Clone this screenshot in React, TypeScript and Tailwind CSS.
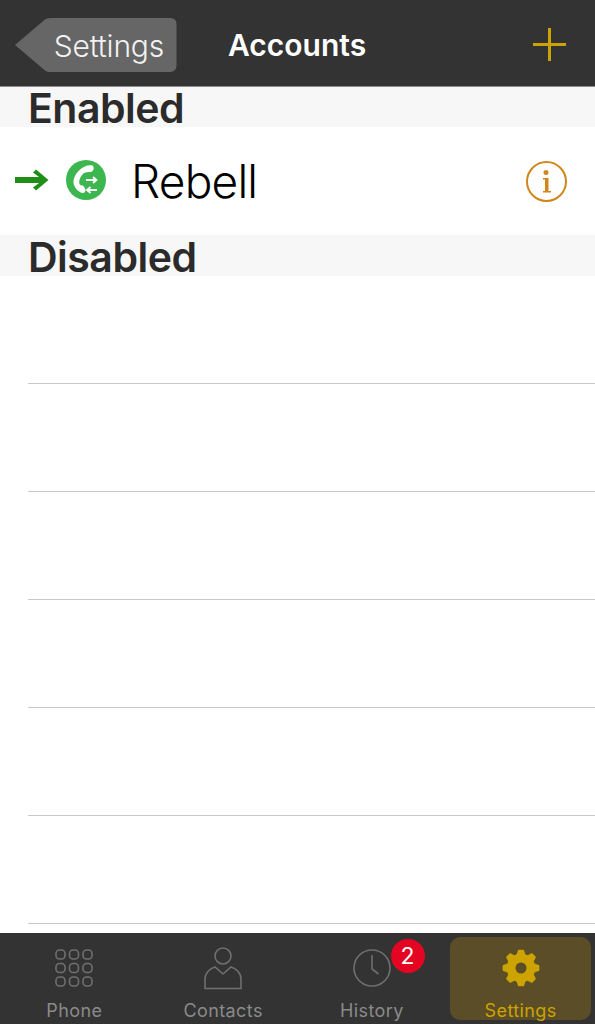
const font = { fontFamily: 'Inter, "Liberation Sans", Arial, sans-serif' };

function KeypadIcon() {
  const spots = [0, 1, 2];
  return (
    <svg width="38" height="38" viewBox="0 0 38 38" fill="none" stroke="#6f6f6f" strokeWidth="1.6">
      {spots.map((r) =>
        spots.map((c) => (
          <rect key={`${r}-${c}`} x={1 + c * 13.5} y={1 + r * 13.5} width="9" height="9" rx="3.500" />
        ))
      )}
    </svg>
  );
}

function ContactIcon() {
  return (
    <svg width="38" height="43" viewBox="0 0 38 43" fill="none" stroke="#6f6f6f" strokeWidth="1.6">
      <circle cx="19" cy="9" r="8" />
      <path d="M1 41.500V32C1 26 6 21.500 11 20L19 27L27 20C32 21.500 37 26 37 32V41.500Z" />
    </svg>
  );
}

function ClockIcon() {
  return (
    <svg width="38" height="38" viewBox="0 0 38 38" fill="none" stroke="#6f6f6f" strokeWidth="1.6">
      <circle cx="19" cy="19" r="18" />
      <path d="M19 6V20L25.500 25" />
    </svg>
  );
}

// 8 toothed cog, points worked out from the angles
function GearIcon() {
  const pts: string[] = [];
  for (let i = 0; i < 8; i++) {
    const a = (i * Math.PI) / 4;
    const at = (r: number, d: number) => {
      const t = a + (d * Math.PI) / 180;
      return `${(19 + r * Math.sin(t)).toFixed(2)} ${(19 - r * Math.cos(t)).toFixed(2)}`;
    };
    pts.push(at(13.5, -15), at(17.5, -7), at(17.5, 7), at(13.5, 15));
  }
  return (
    <svg width="38" height="38" viewBox="0 0 38 38" fill="#cca300" stroke="#cca300" strokeWidth="2" strokeLinejoin="round">
      <path
        fillRule="evenodd"
        d={`M${pts.join("L")}Z M19 12.500a6.500 6.500 0 1 0 0 13a6.500 6.500 0 0 0 0 -13Z`}
      />
    </svg>
  );
}

function AccountBadge() {
  return (
    <svg width="40" height="40" viewBox="0 0 40 40">
      <circle cx="20" cy="20" r="20" fill="#3cb64f" />
      <path
        d="M26.500 5.500C22 4.500 17 6.500 13 10.500C9 14.500 7 19 7.500 23C8 27 12 32 16.500 33C18.500 33.300 20 31 19.500 29.500L17.500 26C16.500 25 15 26 13.800 24.500C12.500 22.500 13.500 17.500 16.500 14.500C18 13 19.500 12 21 12.300L25.500 11.800C27.800 11 28.500 7 26.500 5.500Z"
        fill="#fff"
      />
      <path d="M20 20H30M27 17L30.500 20L27 23" fill="none" stroke="#fff" strokeWidth="1.800" />
      <path d="M31 30H21.500M24.500 27L21 30L24.500 33" fill="none" stroke="#fff" strokeWidth="1.800" />
    </svg>
  );
}

function GreenArrow() {
  return (
    <svg width="34" height="22" viewBox="0 0 34 22">
      <path d="M0 8H24L18 3.500L21 .5L33.500 11L21 21.500L18 18.500L24 14H0Z" fill="#1f8f17" />
    </svg>
  );
}

function SectionHeader({ title, height }: { title: string; height: string }) {
  return (
    <div className={`${height} bg-[#f7f7f7] pl-7 flex items-center`}>
      <span className="text-[41px] font-semibold text-[#2b2b2b] leading-none mt-[3px] tracking-[-0.5px]">{title}</span>
    </div>
  );
}

function Tab({ label, icon, active }: { label: string; icon: React.ReactNode; active?: boolean }) {
  return (
    <div
      className={`rounded-[10px] flex flex-col items-center h-[83px] ${
        active ? "bg-[#5a4d27] text-[#cca300] ml-[4px] mr-[4px]" : "text-[#8a8a8a]"
      }`}
    >
      <div className="h-[52px] shrink-0 flex items-center justify-center mt-[5px]">{icon}</div>
      <span className="shrink-0 text-[18px] tracking-[0.4px] leading-[22px] mt-[6px]">{label}</span>
    </div>
  );
}

export default function App() {
  return (
    <div className="w-[595px] h-[1024px] bg-white flex flex-col overflow-hidden" style={font}>
      {/* nav bar */}
      <div className="h-[87px] shrink-0 bg-[#333333] border-b border-[#8c8c8c] flex items-center pl-[15px] pr-[29px] pt-[3px]">
        <div className="relative w-[162px] h-[54px] flex items-center justify-end pr-[13px]">
          <svg className="absolute inset-0" width="162" height="54" viewBox="0 0 162 54">
            <path
              d="M0 27L30 1.500Q32 0 35 0H155Q161.500 0 161.500 6V47Q161.500 54 155 54H35Q32 54 30 52.500Z"
              fill="#666666"
            />
          </svg>
          <span className="relative text-[30px] font-light text-[#f2f2f2] leading-none tracking-[-0.2px] mt-[2px]">
            Settings
          </span>
        </div>
        <span className="ml-[51px] text-[30px] font-semibold text-white leading-none mt-[1px]">Accounts</span>
        <svg className="ml-auto -mt-[1px]" width="33" height="33" viewBox="0 0 33 33" stroke="#cca300" strokeWidth="3">
          <path d="M16.500 0V33M0 16.500H33" />
        </svg>
      </div>

      <SectionHeader title="Enabled" height="h-[40px]" />
      <div className="h-[108px] flex items-center pl-[15px] pr-[28px]">
        <div className="-mt-[2px]">
          <GreenArrow />
        </div>
        <div className="ml-[17px] -mt-[2px]">
          <AccountBadge />
        </div>
        <span className="ml-[25px] text-[46px] font-light text-black leading-none tracking-[-0.8px]">Rebell</span>
        <svg className="ml-auto" width="41" height="41" viewBox="0 0 41 41">
          <circle cx="20.500" cy="20.500" r="19.500" fill="none" stroke="#d0861a" strokeWidth="2" />
          <circle cx="20" cy="11.500" r="2.500" fill="#d0861a" />
          <path d="M17 17H22.500V30H25V31.500H17V30H19V18.500H17Z" fill="#d0861a" />
        </svg>
      </div>

      <SectionHeader title="Disabled" height="h-[41px]" />
      <div className="flex-1 pl-7 overflow-hidden">
        {[0, 1, 2, 3, 4, 5].map((i) => (
          <div key={i} className="h-[108px] border-b border-[#c8c8c8]" />
        ))}
      </div>

      {/* tab bar */}
      <div className="h-[91px] shrink-0 bg-[#333333] grid grid-cols-4 pt-[4px]">
        <Tab label="Phone" icon={<KeypadIcon />} />
        <Tab label="Contacts" icon={<ContactIcon />} />
        <div className="relative">
          <Tab label="History" icon={<ClockIcon />} />
          <div className="absolute left-[93px] top-[2px] w-[34px] h-[34px] rounded-full bg-[#e40523] text-white text-[23px] flex items-center justify-center">
            2
          </div>
        </div>
        <Tab label="Settings" icon={<GearIcon />} active />
      </div>
    </div>
  );
}
